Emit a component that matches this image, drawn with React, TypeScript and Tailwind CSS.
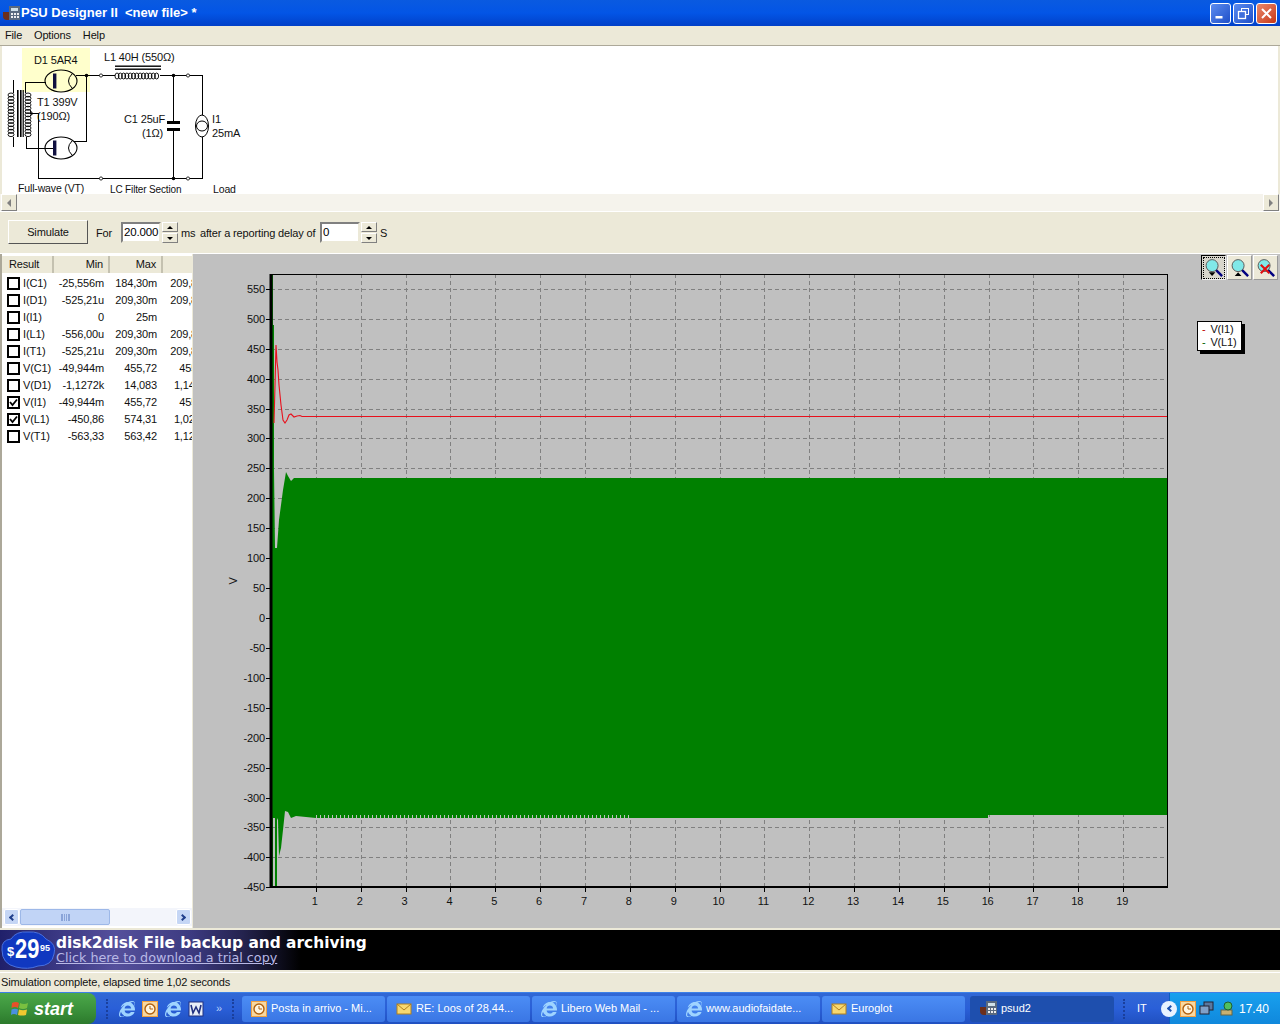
import React from 'react';
import { FaInternetExplorer } from 'react-icons/fa';

const ui = "font-['Liberation_Sans',Arial,sans-serif]";

const rows = [
  { name: 'I(C1)', min: '-25,556m', max: '184,30m', pp: '209,86m', on: false },
  { name: 'I(D1)', min: '-525,21u', max: '209,30m', pp: '209,82m', on: false },
  { name: 'I(I1)', min: '0', max: '25m', pp: '', on: false },
  { name: 'I(L1)', min: '-556,00u', max: '209,30m', pp: '209,86m', on: false },
  { name: 'I(T1)', min: '-525,21u', max: '209,30m', pp: '209,82m', on: false },
  { name: 'V(C1)', min: '-49,944m', max: '455,72', pp: '455,77', on: false },
  { name: 'V(D1)', min: '-1,1272k', max: '14,083', pp: '1,1413k', on: false },
  { name: 'V(I1)', min: '-49,944m', max: '455,72', pp: '455,77', on: true },
  { name: 'V(L1)', min: '-450,86', max: '574,31', pp: '1,0252k', on: true },
  { name: 'V(T1)', min: '-563,33', max: '563,42', pp: '1,1268k', on: false },
];

const yTicks = [550, 500, 450, 400, 350, 300, 250, 200, 150, 100, 50, 0, -50, -100, -150, -200, -250, -300, -350, -400, -450];
const xTicks = Array.from({ length: 19 }, (_, i) => i + 1);
const yPos = (v: number) => 618 - v * 0.5985;
const xPos = (t: number) => 271 + t * 44.85;

const Spin = () => (
  <div className="flex flex-col w-[16px] h-[21px] gap-px">
    <div className="flex-1 bg-[#ece9d8] border border-t-white border-l-white border-r-[#808080] border-b-[#808080] flex items-center justify-center">
      <div className="w-0 h-0 border-x-[3px] border-x-transparent border-b-[3px] border-b-black" />
    </div>
    <div className="flex-1 bg-[#ece9d8] border border-t-white border-l-white border-r-[#808080] border-b-[#808080] flex items-center justify-center">
      <div className="w-0 h-0 border-x-[3px] border-x-transparent border-t-[3px] border-t-black" />
    </div>
  </div>
);

const NumBox = ({ value }: { value: string }) => (
  <div className="w-[40px] h-[21px] bg-white border-2 border-t-[#808080] border-l-[#808080] border-r-[#ece9d8] border-b-[#ece9d8] pl-[1px] leading-[16px] text-black text-[11.5px]">
    {value}
  </div>
);

const WinButton = ({ kind }: { kind: 'min' | 'max' | 'close' }) => (
  <div
    className={
      kind === 'close'
        ? 'w-[21px] h-[21px] rounded-[3px] border border-white bg-gradient-to-br from-[#e8876a] to-[#c7350f] flex items-center justify-center'
        : 'w-[21px] h-[21px] rounded-[3px] border border-white bg-gradient-to-br from-[#5c8cf0] to-[#1f4ec8] flex items-center justify-center'
    }
  >
    <svg width="15" height="15" viewBox="0 0 15 15" fill="none" stroke="white">
      {kind === 'min' && <rect x="2.5" y="10" width="7" height="2.5" fill="white" stroke="none" />}
      {kind === 'max' && (
        <>
          <rect x="5.5" y="2.5" width="7" height="6" strokeWidth="1" />
          <rect x="2.5" y="5.5" width="7" height="7" strokeWidth="1.3" fill="#3f6fdc" />
        </>
      )}
      {kind === 'close' && <path d="M3 3 L12 12 M12 3 L3 12" strokeWidth="2" />}
    </svg>
  </div>
);

const AppIcon = () => (
  <svg width="18" height="17" viewBox="0 0 18 17">
    <path d="M0 7 h7 v8 h-3 q-4 0 -4 -4z" fill="#6b2f1c" />
    <rect x="6" y="1" width="11" height="14" fill="#5a6a7e" />
    <rect x="8" y="3" width="7" height="3" fill="#cfe0e8" />
    <path d="M8 8h2v2H8zM11 8h2v2h-2zM14 8h2v2h-2zM8 11h2v2H8zM11 11h2v2h-2zM14 11h2v2h-2z" fill="#eee" />
  </svg>
);

const Tube = ({ cy, x = 61 }: { cy: number; x?: number }) => (
  <g>
    <ellipse cx={x} cy={cy} rx="16" ry="11" fill="none" stroke="black" strokeWidth="1.1" />
    <rect x={x - 8} y={cy - 7.5} width="3.4" height="15" fill="#101040" />
    <path d={`M${x + 11} ${cy - 7} Q${x + 4} ${cy} ${x + 11} ${cy + 7}`} fill="none" stroke="black" />
  </g>
);

const Coil = ({ vertical, x, y, n }: { vertical?: boolean; x: number; y: number; n: number }) => (
  <g fill="none" stroke="black" strokeWidth="0.9">
    {Array.from({ length: n }, (_, i) =>
      vertical ? (
        <ellipse key={i} cx={x} cy={y + i * 3.3} rx="3" ry="2" />
      ) : (
        <ellipse key={i} cx={x + i * 3.3} cy={y} rx="2" ry="3" />
      ),
    )}
  </g>
);

const Schematic = () => (
  <svg width="250" height="148" viewBox="2 46 250 148" className="block">
    <rect x="22" y="48" width="68" height="44" fill="#ffffcc" />
    <g fill="none" stroke="black" strokeWidth="1" shapeRendering="crispEdges">
      <path d="M25.5 93 V82.5 H46" />
      <path d="M26.5 137 V148.5 H46" />
      <path d="M13.5 80 V93 M13.5 137 V147" />
      <path d="M30 113.5 H38.5 V178.5 H202.5 V75.5 H76" />
      <path d="M86.5 75 V141.5 H74" />
      <path d="M173.5 75 V122 M173.5 130 V178" />
    </g>
    <rect x="115" y="73" width="45" height="5" fill="white" />
    <Coil x={117} y={76} n={13} />
    <rect x="115" y="65.5" width="46" height="1.4" fill="black" />
    <rect x="115" y="68.5" width="46" height="1.4" fill="black" />
    <Coil vertical x={11} y={95} n={13} />
    <Coil vertical x={28} y={95} n={13} />
    <rect x="17" y="90" width="1.6" height="47" fill="black" />
    <rect x="20" y="90" width="1.6" height="47" fill="black" />
    <rect x="22.6" y="90" width="1.2" height="47" fill="black" />
    <Tube cy={81} />
    <Tube cy={148} />
    <path d="M46 148.5 H53" stroke="black" />
    <rect x="167" y="121" width="13" height="3" fill="black" />
    <rect x="167" y="128" width="13" height="3" fill="black" />
    <ellipse cx="202" cy="126" rx="6.5" ry="11" fill="white" stroke="black" />
    <ellipse cx="202" cy="126" rx="5.5" ry="5" fill="none" stroke="black" />
    <circle cx="86.5" cy="75.5" r="1.8" fill="black" />
    <circle cx="173.5" cy="75.5" r="1.8" fill="black" />
    <circle cx="173.5" cy="178.5" r="1.8" fill="black" />
    <path d="M30 111 L33 113.5 L30 116" stroke="black" fill="none" />
    {[[101, 75.5], [188, 75.5], [101, 178.5], [188, 178.5]].map(([cx, cy]) => (
      <circle key={`${cx}-${cy}`} cx={cx} cy={cy} r="1.6" fill="white" stroke="black" strokeWidth="0.8" />
    ))}
    <g fontSize="11" fill="#111">
      <text x="34" y="64">D1 5AR4</text>
      <text x="104" y="61">L1 40H (550Ω)</text>
      <text x="37" y="106">T1 399V</text>
      <text x="37" y="120">(190Ω)</text>
      <text x="124" y="123">C1 25uF</text>
      <text x="142" y="137">(1Ω)</text>
      <text x="212" y="123">I1</text>
      <text x="212" y="137">25mA</text>
      <text x="18" y="192" fontSize="10.5">Full-wave (VT)</text>
      <text x="110" y="192.5" fontSize="10">LC Filter Section</text>
      <text x="213" y="192.5" fontSize="10.5">Load</text>
    </g>
  </svg>
);

const Chart = () => (
  <svg width="1087" height="674" viewBox="193 254 1087 674" className="block">
    <rect x="193" y="254" width="1087" height="674" fill="#c0c0c0" />
    {/* grid */}
    <g stroke="#808080" strokeWidth="1" strokeDasharray="4 3">
      {yTicks.slice(0, 20).map((v) => (
        <line key={v} x1="271" x2="1167" y1={Math.round(yPos(v)) + 0.5} y2={Math.round(yPos(v)) + 0.5} />
      ))}
      {xTicks.map((t) => (
        <line key={t} y1="274" y2="887" x1={Math.round(xPos(t)) + 0.5} x2={Math.round(xPos(t)) + 0.5} />
      ))}
    </g>
    {/* L1 trace */}
    <path
      fill="#008000"
      d="M271 275 H273 V325 H274 V470 L275 548 L277 548 L279 520 L281 505 L283 490 L286 472 L288 476 L291 481 L294 478 H1167 V815 H988 V818 H316 L296 816 L291 818 L288 812 L285 811 L283 830 L281 848 L279 856 L278 820 L277 818 V887 H275 V818 H273 V887 H271 Z"
    />
    <g stroke="#c0c0c0" strokeWidth="1">
      {Array.from({ length: 79 }, (_, i) => (
        <line key={i} x1={316.5 + i * 4} x2={316.5 + i * 4} y1="815" y2="818" />
      ))}
    </g>
    {/* I1 trace */}
    <path
      fill="none"
      stroke="#e8101c"
      strokeWidth="1.1"
      d="M274 423 L275 385 L276 345 L277 362 L278 370 L279 385 L281 405 L283 420 L285 423 L287 420 L289 415 L291 414 L294 417 L297 416 L300 415.5 L302 416.5 H1167"
    />
    {/* axes */}
    <g stroke="black" fill="none">
      <line x1="271" x2="271" y1="274" y2="888" strokeWidth="3" />
      <line x1="270" x2="1168" y1="274.5" y2="274.5" />
      <line x1="1167.5" x2="1167.5" y1="274" y2="888" />
      <line x1="270" x2="1168" y1="887" y2="887" strokeWidth="2" />
    </g>
    <g stroke="#000" strokeWidth="1">
      {yTicks.map((v) => (
        <line key={v} x1="266" x2="270" y1={Math.round(yPos(v)) + 0.5} y2={Math.round(yPos(v)) + 0.5} />
      ))}
      {xTicks.map((t) => (
        <line key={t} y1="888" y2="892" x1={Math.round(xPos(t)) + 0.5} x2={Math.round(xPos(t)) + 0.5} />
      ))}
    </g>
    <g fontSize="11" fill="#111">
      {yTicks.map((v) => (
        <text key={v} x="265" y={yPos(v) + 4} textAnchor="end">
          {v}
        </text>
      ))}
      {xTicks.map((t) => (
        <text key={t} x={xPos(t) - 1} y="905" textAnchor="middle">
          {t}
        </text>
      ))}
      <text x="237" y="581" textAnchor="middle" transform="rotate(-90 237 581)">
        V
      </text>
    </g>
  </svg>
);

const Zoom = ({ mark, pressed }: { mark: 'down' | 'up' | 'x'; pressed?: boolean }) => (
  <div
    className={
      pressed
        ? 'w-[25px] h-[25px] border border-black border-r-[#eee] border-b-[#eee] bg-[#d8d6cc] flex items-center justify-center'
        : 'w-[25px] h-[25px] bg-[#ece9d8] border border-t-white border-l-white border-r-[#999] border-b-[#999] flex items-center justify-center'
    }
  >
    <div className={pressed ? 'border border-dotted border-black leading-none' : 'border border-transparent leading-none'}>
      <svg width="20" height="20" viewBox="0 0 21 21" className="block">
        <line x1="12" y1="12" x2="19" y2="19" stroke="#000080" strokeWidth="2.6" />
        <circle cx="8.5" cy="8" r="6.3" fill="#80e8e8" stroke="#555" strokeWidth="1" />
        {mark === 'down' && <path d="M5 15 h7 l-3.5 4z" fill="black" />}
        {mark === 'up' && <path d="M5 19 h7 l-3.5 -4z" fill="black" />}
        {mark === 'x' && <path d="M5 7 L14 16 M14 7 L5 16" stroke="#e01010" strokeWidth="2.2" />}
      </svg>
    </div>
  </div>
);

const TaskButton = ({ label, icon, active }: { label: string; icon: React.ReactNode; active?: boolean }) => (
  <div
    className={
      active
        ? 'w-[144px] h-[26px] rounded-[3px] bg-[#1e4fae] flex items-center gap-[3px] pl-[10px] text-white text-[11px] whitespace-nowrap'
        : 'w-[143px] h-[26px] rounded-[3px] bg-gradient-to-b from-[#4c8df5] to-[#3a76e4] flex items-center gap-[4px] pl-[9px] text-white text-[11px] whitespace-nowrap'
    }
  >
    {icon}
    <span>{label}</span>
  </div>
);

const ClockIcon = () => (
  <svg width="16" height="16" viewBox="0 0 16 16">
    <rect x="0.5" y="0.5" width="15" height="15" fill="#f8d8a0" stroke="#f0a040" />
    <circle cx="8" cy="8" r="5" fill="#fff6e0" stroke="#b06010" strokeWidth="1.4" />
    <path d="M8 5 V8 H11" stroke="#b06010" fill="none" />
  </svg>
);

const MailIcon = () => (
  <svg width="16" height="14" viewBox="0 0 16 14">
    <rect x="1" y="2" width="14" height="10" fill="#f8d870" stroke="#b08020" />
    <path d="M1 2 L8 8 L15 2" fill="none" stroke="#b08020" />
  </svg>
);

const IeIcon = () => <FaInternetExplorer size={16} color="#9fd4ff" />;

const WordIcon = () => (
  <svg width="16" height="16" viewBox="0 0 16 16">
    <rect x="1" y="1" width="14" height="14" fill="#e8eef8" stroke="#203080" />
    <path d="M3 4 L5 12 L8 6 L11 12 L13 4" fill="none" stroke="#203080" strokeWidth="1.6" />
  </svg>
);

const Grip = () => <div className="w-[3px] h-[20px] border-l-2 border-dotted border-[#1a3f9c]" />;

export default function App() {
  return (
    <div className={`${ui} w-[1280px] h-[1024px] overflow-hidden flex flex-col bg-[#ece9d8] text-[11px] tracking-[-0.15px] text-[#111]`}>
      {/* title bar */}
      <div className="h-[26px] shrink-0 bg-gradient-to-b from-[#0a5ae0] via-[#0355e6] to-[#0240c8] flex items-center pl-[3px] pr-[3px]">
        <AppIcon />
        <span className="text-white font-bold text-[13px] tracking-[0px] whitespace-pre">PSU Designer II  &lt;new file&gt; *</span>
        <div className="ml-auto flex gap-[2px]">
          <WinButton kind="min" />
          <WinButton kind="max" />
          <WinButton kind="close" />
        </div>
      </div>
      {/* menu */}
      <div className="h-[20px] shrink-0 flex items-center gap-[12px] pl-[5px] border-b border-[#aca899]">
        <span className="w-[17px]">File</span>
        <span>Options</span>
        <span>Help</span>
      </div>
      {/* circuit */}
      <div className="h-[148px] shrink-0 bg-white border-x-2 border-[#ece9d8]">
        <Schematic />
      </div>
      {/* horizontal scroll */}
      <div className="h-[17px] shrink-0 bg-[#f5f3ec] flex justify-between pl-[1px] pr-[1px]">
        <div className="w-[16px] h-[17px] bg-[#ece9d8] border border-t-white border-l-white border-r-[#808080] border-b-[#808080] flex items-center justify-center">
          <div className="w-0 h-0 border-y-[4px] border-y-transparent border-r-[4px] border-r-[#808080]" />
        </div>
        <div className="w-[16px] h-[17px] bg-[#ece9d8] border border-t-white border-l-white border-r-[#808080] border-b-[#808080] flex items-center justify-center">
          <div className="w-0 h-0 border-y-[4px] border-y-transparent border-l-[4px] border-l-[#808080]" />
        </div>
      </div>
      {/* simulate controls */}
      <div className="h-[42px] shrink-0 flex items-center border-t border-[#fff] pl-[8px]">
        <div className="w-[80px] h-[24px] -mt-[1px] bg-[#ece9d8] border border-t-white border-l-white border-r-[#555] border-b-[#555] flex items-center justify-center">
          Simulate
        </div>
        <span className="ml-[8px] w-[25px] pt-[1px]">For</span>
        <div className="flex items-center gap-px">
          <NumBox value="20.000" />
          <Spin />
        </div>
        <span className="ml-[3px] w-[19px] pt-[1px]">ms</span>
        <span className="w-[120px] pt-[1px]">after a reporting delay of</span>
        <div className="flex items-center gap-px">
          <NumBox value="0" />
          <Spin />
        </div>
        <span className="ml-[3px] pt-[1px]">S</span>
      </div>
      {/* results + plot */}
      <div className="h-[675px] shrink-0 flex border-t border-[#fff]">
        <div className="w-[193px] shrink-0 border-l-2 border-[#aca899] border-r border-r-[#ece9d8] bg-white flex flex-col overflow-hidden pt-[2px]">
          <div className="h-[17px] shrink-0 bg-[#ece9d8] flex">
            <div className="w-[52px] pl-[7px] border-r-2 border-[#c4c1b0] leading-[17px]">Result</div>
            <div className="w-[56px] pr-[5px] text-right border-r-2 border-[#c4c1b0] leading-[17px]">Min</div>
            <div className="w-[53px] pr-[5px] text-right border-r-2 border-[#c4c1b0] leading-[17px]">Max</div>
            <div className="flex-1" />
          </div>
          <div className="flex-1 pt-[2px]">
            {rows.map((r) => (
              <div key={r.name} className="h-[17px] flex items-center whitespace-nowrap">
                <div className="ml-[5px] w-[13px] h-[13px] shrink-0 border-2 border-black flex items-center justify-center bg-white">
                  {r.on && (
                    <svg width="9" height="9" viewBox="0 0 9 9">
                      <path d="M1 4 L3.5 7 L8 1.5" fill="none" stroke="black" strokeWidth="1.8" />
                    </svg>
                  )}
                </div>
                <span className="ml-[3px] w-[35px] shrink-0">{r.name}</span>
                <span className="w-[46px] shrink-0 text-right">{r.min}</span>
                <span className="w-[53px] shrink-0 text-right">{r.max}</span>
                <span className="w-[55px] shrink-0 text-right">{r.pp}</span>
              </div>
            ))}
          </div>
          <div className="h-[18px] shrink-0 mb-[2px] pl-[2px] pr-[1px] flex items-center gap-[1px] bg-[#f3f5fb]">
            <div className="w-[15px] h-[16px] rounded-[2px] bg-[#c5d6f5] border border-white flex items-center justify-center">
              <div className="w-[5px] h-[5px] border-l-2 border-b-2 border-[#22408c] rotate-45 ml-[2px]" />
            </div>
            <div className="w-[90px] h-[16px] rounded-[2px] bg-[#c1d4f6] border border-[#9db8e8] flex items-center justify-center">
              <div className="w-[9px] h-[7px] border-x border-[#8aa4d8] bg-[repeating-linear-gradient(90deg,#8aa4d8_0,#8aa4d8_1px,transparent_1px,transparent_2px)]" />
            </div>
            <div className="flex-1" />
            <div className="w-[15px] h-[16px] rounded-[2px] bg-[#c5d6f5] border border-white flex items-center justify-center">
              <div className="w-[5px] h-[5px] border-r-2 border-t-2 border-[#22408c] rotate-45 mr-[2px]" />
            </div>
          </div>
        </div>
        <div className="relative flex-1 overflow-hidden">
          <Chart />
          <div className="absolute top-[1px] right-[2px] flex gap-[1px]">
            <Zoom mark="down" pressed />
            <Zoom mark="up" />
            <Zoom mark="x" />
          </div>
          <div className="absolute left-[1004px] top-[67px] w-[45px] h-[30px] bg-white border border-black shadow-[3px_3px_0_#000] text-[11px] leading-[13px] pl-[4px] pt-[1px] whitespace-nowrap">
            <div><span className="text-[#c00000] mr-[2px]">-</span> V(I1)</div>
            <div><span className="text-[#006000] mr-[2px]">-</span> V(L1)</div>
          </div>
        </div>
      </div>
      {/* ad banner */}
      <div className="h-[40px] shrink-0 mt-[2px] bg-[linear-gradient(90deg,#20206a_0%,#55509c_9%,#3c3a80_15%,#24234e_19%,#000_23.5%)] flex items-center relative overflow-hidden font-['DejaVu_Sans',sans-serif] tracking-[0px]">
        <svg width="56" height="40" viewBox="0 0 56 40" className="shrink-0">
          <path d="M2 20 Q1 10 11 9 Q16 1 28 2 Q40 1 46 9 Q57 14 54 24 Q52 36 38 36 Q28 40 16 37 Q2 34 2 20z" fill="#1038c0" stroke="#4870e0" />
          <text x="7" y="26" fill="white" fontSize="13" fontWeight="700" fontFamily="Liberation Sans">$</text>
          <text transform="translate(15 28) scale(0.78 1)" fill="white" fontSize="28" fontWeight="700" fontFamily="Liberation Sans">29</text>
          <text x="40" y="21" fill="white" fontSize="9" fontWeight="700" fontFamily="Liberation Sans">95</text>
        </svg>
        <div className="flex flex-col whitespace-nowrap">
          <span className="text-white font-bold text-[15.4px] leading-[15px]">disk2disk File backup and archiving</span>
          <span className="text-[#b9b9e6] underline text-[12.75px] leading-[14px]">Click here to download a trial copy</span>
        </div>
      </div>
      {/* status */}
      <div className="h-[20px] shrink-0 mt-[2px] pl-[1px] leading-[19px] border-t border-[#fff]">
        Simulation complete, elapsed time 1,02 seconds
      </div>
      {/* taskbar */}
      <div className="flex-1 min-h-0 bg-gradient-to-b from-[#3168d5] via-[#2a5fd8] to-[#2050c0] border-t border-[#3c80e8] flex items-center tracking-[0px]">
        <div className="w-[96px] h-full rounded-r-[8px] bg-gradient-to-b from-[#4ca84a] via-[#3c933c] to-[#2c7a2c] flex items-center pl-[11px] gap-[5px] shrink-0">
          <svg width="18" height="18" viewBox="0 0 18 18">
            <path d="M1 3 Q5 1 8 3 L7 8 Q4 6 0.5 8z" fill="#e8502a" />
            <path d="M9 3 Q13 5 17 3 L16 8 Q12 10 8 8z" fill="#7ac040" />
            <path d="M0.5 9.5 Q4 8 7 9.5 L6 15 Q3 13 0 15z" fill="#4a90e0" />
            <path d="M8 9.5 Q12 11 16 9.5 L15 15 Q11 16 7 15z" fill="#f0c830" />
          </svg>
          <span className="text-white italic font-bold text-[18px] leading-none">start</span>
        </div>
        <div className="ml-[10px] flex items-center gap-[7px] shrink-0">
          <Grip />
          <div className="ml-[3px]"><IeIcon /></div>
          <ClockIcon />
          <IeIcon />
          <WordIcon />
          <span className="text-[#b9d0f8] text-[11px] ml-[5px] w-[9px]">»</span>
          <Grip />
        </div>
        <div className="ml-[7px] flex items-center gap-[2px] shrink-0">
          <TaskButton label="Posta in arrivo - Mi..." icon={<ClockIcon />} />
          <TaskButton label="RE: Loos of 28,44..." icon={<MailIcon />} />
          <TaskButton label="Libero Web Mail - ..." icon={<IeIcon />} />
          <TaskButton label="www.audiofaidate..." icon={<IeIcon />} />
          <TaskButton label="Euroglot" icon={<MailIcon />} />
          <div className="ml-[3px]">
            <TaskButton label="psud2" icon={<AppIcon />} active />
          </div>
        </div>
        <div className="ml-[9px] shrink-0"><Grip /></div>
        <span className="ml-[11px] text-white w-[32px] shrink-0">IT</span>
        <div className="flex-1 h-full bg-gradient-to-b from-[#18a0ee] to-[#1088dc] border-l border-[#0a5ec0] flex items-center gap-[3px]">
          <div className="-ml-[9px] w-[16px] h-[16px] rounded-full bg-[#e8f2ff] flex items-center justify-center">
            <div className="w-[5px] h-[5px] border-l-2 border-b-2 border-[#1a50b0] rotate-45 ml-[2px]" />
          </div>
          <ClockIcon />
          <svg width="16" height="16" viewBox="0 0 16 16">
            <rect x="5" y="1" width="9" height="8" fill="#5a78a0" stroke="#223" />
            <rect x="1" y="5" width="9" height="8" fill="#80a0c8" stroke="#223" />
          </svg>
          <svg width="16" height="16" viewBox="0 0 16 16">
            <rect x="3" y="9" width="11" height="5" fill="#c8b070" stroke="#664" />
            <circle cx="10" cy="5" r="4" fill="#50c060" stroke="#206030" />
          </svg>
          <span className="ml-[2px] text-white text-[12px]">17.40</span>
        </div>
      </div>
    </div>
  );
}
